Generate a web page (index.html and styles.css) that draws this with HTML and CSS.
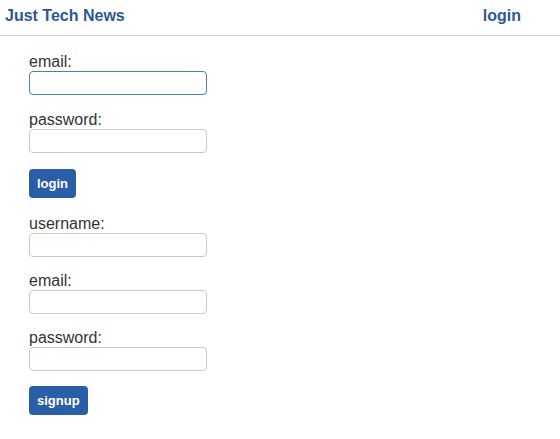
FILE: index.html
```html
<!DOCTYPE html>
<html>
<head>
<meta charset="utf-8">
<link rel="stylesheet" href="styles.css">
</head>
<body>
<header class="site-header">
  <h1 class="brand">Just Tech News</h1>
  <a class="nav-link" href="#">login</a>
</header>
<main class="content">
  <form class="form">
    <div class="field">
      <label class="label">email:</label>
      <input class="input input-focus" type="text" autofocus>
    </div>
    <div class="field">
      <label class="label">password:</label>
      <input class="input" type="password">
    </div>
    <div class="actions">
      <button class="btn" type="button">login</button>
    </div>
  </form>
  <form class="form form-signup">
    <div class="field">
      <label class="label">username:</label>
      <input class="input" type="text">
    </div>
    <div class="field">
      <label class="label">email:</label>
      <input class="input" type="text">
    </div>
    <div class="field">
      <label class="label">password:</label>
      <input class="input" type="password">
    </div>
    <div class="actions">
      <button class="btn" type="button">signup</button>
    </div>
  </form>
</main>
</body>
</html>
```
FILE: styles.css
```css
html, body {
  margin: 0;
  padding: 0;
  background: #fff;
  font-family: "Liberation Sans", Arial, sans-serif;
  color: #333;
}
.site-header {
  display: flex;
  justify-content: space-between;
  align-items: center;
  height: 35px;
  padding: 0 39px 0 5px;
  border-bottom: 1px solid #d3d3d3;
}
.brand {
  margin: 0;
  font-size: 16px;
  font-weight: bold;
  color: #2b5a91;
  margin-top: -3px;
}
.nav-link {
  font-size: 16px;
  font-weight: bold;
  color: #2b5a91;
  text-decoration: none;
  margin-top: -3px;
}
.content {
  padding: 17px 29px 0;
}
.form {
  display: flex;
  flex-direction: column;
  align-items: flex-start;
}
.field {
  display: flex;
  flex-direction: column;
  margin-bottom: 16px;
}
.form-signup .field {
  margin-bottom: 15px;
}
.label {
  font-size: 16px;
  line-height: 18px;
}
.input {
  box-sizing: border-box;
  width: 178px;
  height: 24px;
  margin: 0;
  border: 1px solid #c8c8c8;
  border-radius: 4px;
  font-size: 14px;
  padding: 2px 4px;
  outline: none;
  background: #fff;
}
.input:focus, .input-focus {
  border-color: #4a7fc1;
}
.actions {
  margin-bottom: 17px;
}
.btn {
  box-sizing: border-box;
  height: 29px;
  padding: 0 8px;
  margin: 0;
  border: none;
  border-radius: 4px;
  background: #2a5ea6;
  color: #fff;
  font-family: "Liberation Sans", Arial, sans-serif;
  font-size: 13px;
  font-weight: bold;
  cursor: pointer;
}
```
